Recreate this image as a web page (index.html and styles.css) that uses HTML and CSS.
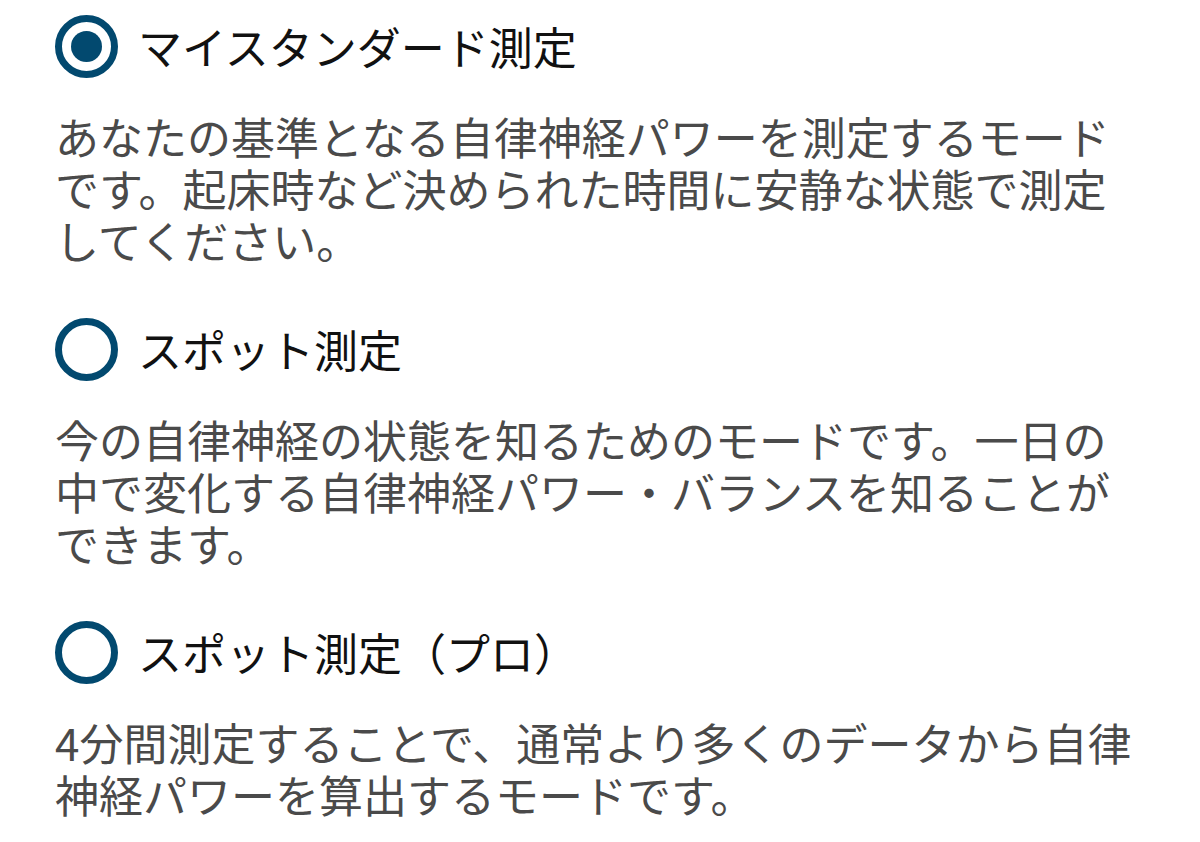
FILE: index.html
```html
<!DOCTYPE html>
<html lang="ja">
<head>
<meta charset="utf-8">
<link rel="stylesheet" href="styles.css">
</head>
<body>
<div class="list">
  <div class="option">
    <div class="head">
      <span class="radio checked"></span>
      <span class="title">マイスタンダード測定</span>
    </div>
    <p class="desc">あなたの基準となる自律神経パワーを測定するモード<br>です。起床時など決められた時間に安静な状態で測定<br>してください。</p>
  </div>
  <div class="option">
    <div class="head">
      <span class="radio"></span>
      <span class="title">スポット測定</span>
    </div>
    <p class="desc">今の自律神経の状態を知るためのモードです。一日の<br>中で変化する自律神経パワー・バランスを知ることが<br>できます。</p>
  </div>
  <div class="option">
    <div class="head">
      <span class="radio"></span>
      <span class="title">スポット測定（プロ）</span>
    </div>
    <p class="desc">4分間測定することで、通常より多くのデータから自律<br>神経パワーを算出するモードです。</p>
  </div>
</div>
</body>
</html>
```
FILE: styles.css
```css
html, body {
  margin: 0;
  padding: 0;
  background: #ffffff;
}
body {
  font-family: "Noto Sans CJK JP", "Noto Sans", sans-serif;
  width: 1200px;
  height: 842px;
  overflow: hidden;
}
.list {
  display: flex;
  flex-direction: column;
  gap: 52px;
  padding: 15px 0 0 55px;
}
.option {
  display: flex;
  flex-direction: column;
  gap: 33px;
}
.head {
  display: flex;
  align-items: center;
  gap: 20px;
  height: 62px;
}
.radio {
  box-sizing: border-box;
  width: 63px;
  height: 63px;
  border: 7px solid #02496f;
  border-radius: 50%;
  display: flex;
  align-items: center;
  justify-content: center;
  flex: none;
}
.radio.checked::after {
  content: "";
  width: 31px;
  height: 31px;
  border-radius: 50%;
  background: #02496f;
}
.title {
  font-size: 44px;
  line-height: 62px;
  color: #111111;
}
.desc {
  margin: 0;
  font-size: 44px;
  line-height: 52px;
  color: #4a4a4a;
  white-space: nowrap;
}
```
